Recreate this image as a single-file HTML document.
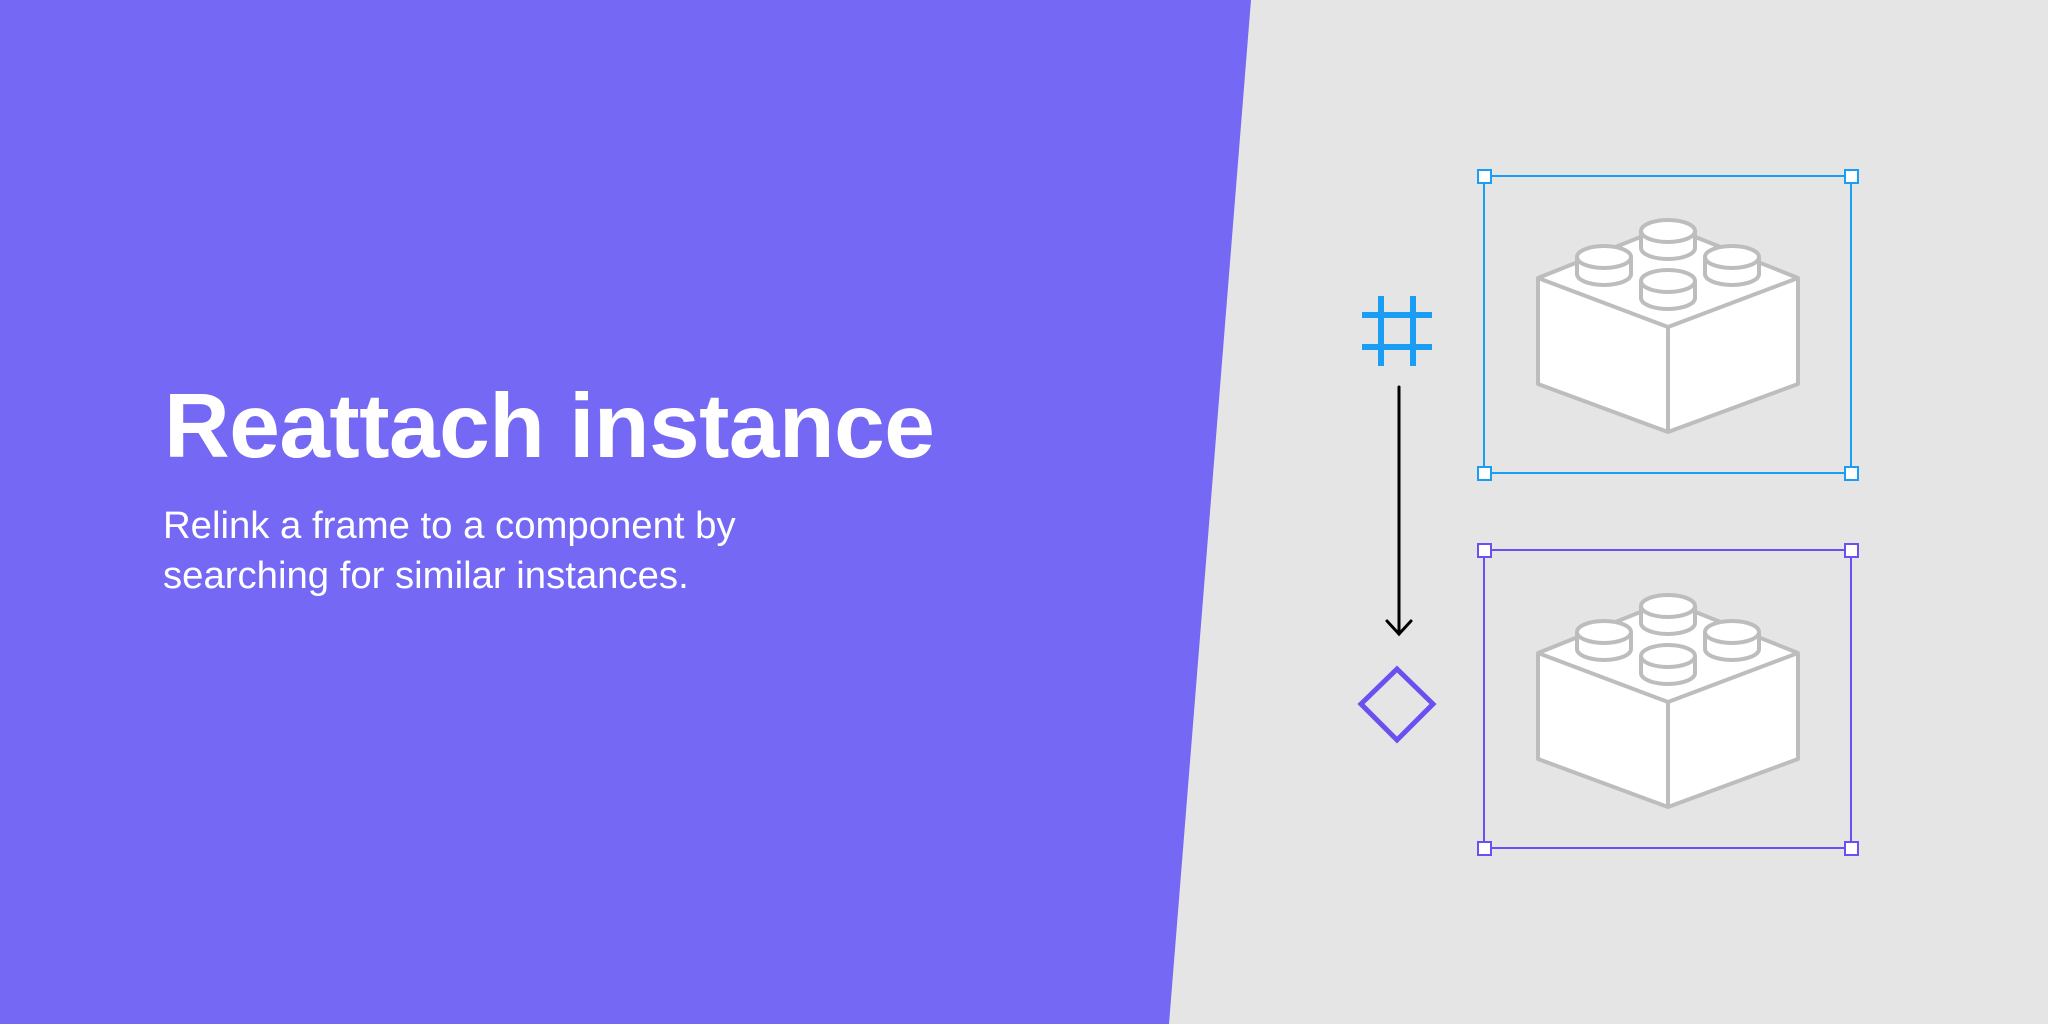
<!DOCTYPE html>
<html><head><meta charset="utf-8"><style>
html,body{margin:0;padding:0}
body{width:2048px;height:1024px;position:relative;overflow:hidden;background:#e5e5e5;font-family:"Liberation Sans",sans-serif}
svg{position:absolute;left:0;top:0}
.t{position:absolute;left:164px;top:381px;color:#fff;font-weight:bold;font-size:91px;line-height:1;white-space:nowrap;letter-spacing:-0.5px}
.s{position:absolute;left:163px;top:501px;color:#fff;font-size:38.3px;line-height:50px;white-space:nowrap}
</style></head><body>
<svg width="2048" height="1024" viewBox="0 0 2048 1024">
<polygon points="0,0 1251,0 1169,1024 0,1024" fill="#7468f4"/>
<defs>
<g id="brick" stroke="#bdbdbd" stroke-width="4" stroke-linejoin="round" fill="#fff">
<polygon points="1538,278 1668,226 1798,278 1798,384 1668,432 1538,384"/>
<polyline points="1538,278 1668,327 1798,278" fill="none"/>
<line x1="1668" y1="327" x2="1668" y2="432"/>
</g>
<g id="stud" stroke="#bdbdbd" stroke-width="4" fill="#fff"><path d="M-27,0 v17 a27,11 0 0 0 54,0 v-17"/><ellipse cx="0" cy="0" rx="27" ry="11"/></g>
<g id="full">
<use href="#brick"/>
<use href="#stud" x="1668" y="231"/><use href="#stud" x="1604" y="257"/><use href="#stud" x="1732" y="257"/><use href="#stud" x="1668" y="281"/>
</g>
</defs>
<use href="#full"/>
<use href="#full" y="375"/>
<g stroke="#1a9ef5" stroke-width="2" fill="#fff">
<rect x="1484" y="176" width="367" height="297" fill="none"/>
<rect x="1478" y="170" width="13" height="13"/><rect x="1845" y="170" width="13" height="13"/>
<rect x="1478" y="467" width="13" height="13"/><rect x="1845" y="467" width="13" height="13"/>
</g>
<g stroke="#6a50f0" stroke-width="2" fill="#fff">
<rect x="1484" y="550" width="367" height="298" fill="none"/>
<rect x="1478" y="544" width="13" height="13"/><rect x="1845" y="544" width="13" height="13"/>
<rect x="1478" y="842" width="13" height="13"/><rect x="1845" y="842" width="13" height="13"/>
</g>
<g stroke="#1a9ef5" stroke-width="6">
<line x1="1381" y1="296" x2="1381" y2="366"/><line x1="1413" y1="296" x2="1413" y2="366"/>
<line x1="1362" y1="315" x2="1432" y2="315"/><line x1="1362" y1="347" x2="1432" y2="347"/>
</g>
<g stroke="#000" stroke-width="3" fill="none" stroke-linecap="round">
<line x1="1399" y1="387" x2="1399" y2="634"/>
<polyline points="1387,621 1399,634 1411,621"/>
</g>
<polygon points="1397,669 1433,704 1397,740 1361,704" fill="none" stroke="#6a50f0" stroke-width="5"/>
</svg>
<div class="t">Reattach instance</div>
<div class="s">Relink a frame to a component by<br>searching for similar instances.</div>
</body></html>
